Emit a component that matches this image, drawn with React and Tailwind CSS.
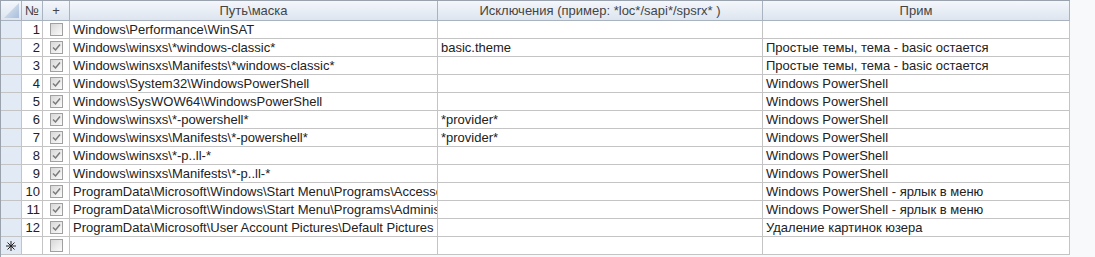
import React from 'react'

const rows = [
  { n: 1, on: false, path: 'Windows\\Performance\\WinSAT', exc: '', note: '' },
  { n: 2, on: true, path: 'Windows\\winsxs\\*windows-classic*', exc: 'basic.theme', note: 'Простые темы, тема - basic остается' },
  { n: 3, on: true, path: 'Windows\\winsxs\\Manifests\\*windows-classic*', exc: '', note: 'Простые темы, тема - basic остается' },
  { n: 4, on: true, path: 'Windows\\System32\\WindowsPowerShell', exc: '', note: 'Windows PowerShell' },
  { n: 5, on: true, path: 'Windows\\SysWOW64\\WindowsPowerShell', exc: '', note: 'Windows PowerShell' },
  { n: 6, on: true, path: 'Windows\\winsxs\\*-powershell*', exc: '*provider*', note: 'Windows PowerShell' },
  { n: 7, on: true, path: 'Windows\\winsxs\\Manifests\\*-powershell*', exc: '*provider*', note: 'Windows PowerShell' },
  { n: 8, on: true, path: 'Windows\\winsxs\\*-p..ll-*', exc: '', note: 'Windows PowerShell' },
  { n: 9, on: true, path: 'Windows\\winsxs\\Manifests\\*-p..ll-*', exc: '', note: 'Windows PowerShell' },
  { n: 10, on: true, path: 'ProgramData\\Microsoft\\Windows\\Start Menu\\Programs\\Accessories', exc: '', note: 'Windows PowerShell - ярлык в меню' },
  { n: 11, on: true, path: 'ProgramData\\Microsoft\\Windows\\Start Menu\\Programs\\Administrative Tools', exc: '', note: 'Windows PowerShell - ярлык в меню' },
  { n: 12, on: true, path: 'ProgramData\\Microsoft\\User Account Pictures\\Default Pictures', exc: '', note: 'Удаление картинок юзера' },
]

function Check({ on }) {
  return (
    <span className="flex h-[13px] w-[13px] items-center justify-center border border-[#a0a0a0] bg-gradient-to-br from-[#d8d8d8] to-[#fbfbfb]">
      {on && (
        <svg width="9" height="9" viewBox="0 0 9 9">
          <path d="M1 4.5 L3.5 7 L8 1.5" fill="none" stroke="#7a7a7a" strokeWidth="1.5" />
        </svg>
      )}
    </span>
  )
}

const cols = 'grid grid-cols-[21px_21px_27px_368px_325px_307px]'
const cell = 'h-[18px] border-b border-r border-[#c4c4c4] overflow-hidden whitespace-nowrap'
const head = 'flex h-[20px] items-center justify-center border-b border-r border-[#a9b3c0]'

export default function App() {
  return (
    <div className="flex h-[257px] w-[1095px] bg-[#f8f9fb] font-['Liberation_Sans',Arial,sans-serif] text-[13px] text-[#222]">
      <div className="w-[1070px] border-l border-t border-[#9aa3ad]">
        <div className={`${cols} bg-gradient-to-b from-[#f4f7fb] to-[#dce4ef] text-[#444]`}>
          <div className="flex h-[20px] items-end justify-end border-b border-r border-[#a9b3c0] pb-[2px] pr-[2px]">
            <svg width="15" height="15" viewBox="0 0 15 15">
              <defs>
                <linearGradient id="tri" x1="0" y1="0" x2="1" y2="1">
                  <stop offset="0" stopColor="#e3ebf6" />
                  <stop offset="1" stopColor="#a9bedb" />
                </linearGradient>
              </defs>
              <polygon points="0,15 15,15 15,0" fill="url(#tri)" />
            </svg>
          </div>
          <div className={head}>№</div>
          <div className={head}>+</div>
          <div className={head}>Путь\маска</div>
          <div className={head}>Исключения (пример: *loc*/sapi*/spsrx* )</div>
          <div className={head}>Прим</div>
        </div>
        {rows.map((r) => (
          <div key={r.n} className={`${cols} bg-white`}>
            <div className={`${cell} bg-[#e2eaf6]`} />
            <div className={`${cell} flex items-center justify-end pr-[2px]`}>{r.n}</div>
            <div className={`${cell} flex items-center justify-center`}><Check on={r.on} /></div>
            <div className={`${cell} flex items-center pl-[3px]`}>{r.path}</div>
            <div className={`${cell} flex items-center pl-[3px]`}>{r.exc}</div>
            <div className={`${cell} flex items-center pl-[3px]`}>{r.note}</div>
          </div>
        ))}
        <div className={`${cols} bg-white`}>
          <div className={`${cell} flex items-center justify-center bg-[#e2eaf6]`}>
            <svg width="10" height="10" viewBox="0 0 10 10" stroke="#222" strokeWidth="1">
              <line x1="5" y1="0" x2="5" y2="10" />
              <line x1="0" y1="5" x2="10" y2="5" />
              <line x1="1.5" y1="1.5" x2="8.5" y2="8.5" />
              <line x1="8.5" y1="1.5" x2="1.5" y2="8.5" />
            </svg>
          </div>
          <div className={cell} />
          <div className={`${cell} flex items-center justify-center`}><Check on={false} /></div>
          <div className={cell} />
          <div className={cell} />
          <div className={cell} />
        </div>
      </div>
    </div>
  )
}
